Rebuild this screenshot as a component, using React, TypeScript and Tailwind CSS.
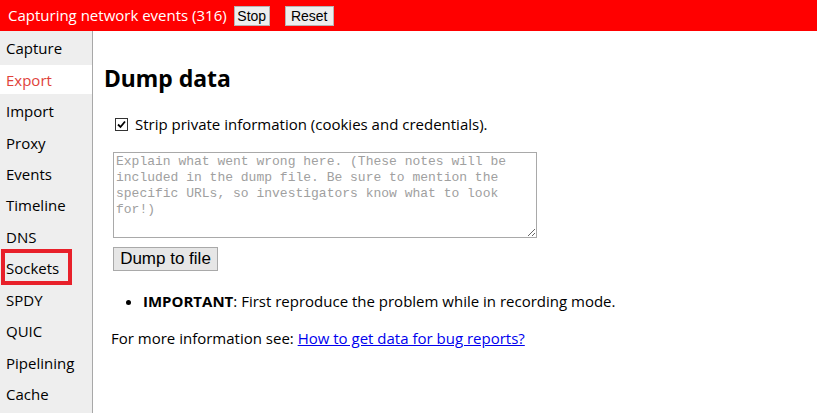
import React from 'react';

const tabs = ['Capture', 'Export', 'Import', 'Proxy', 'Events', 'Timeline', 'DNS', 'Sockets', 'SPDY', 'QUIC', 'Pipelining', 'Cache'];

const ui = { fontFamily: '"Open Sans", "Noto Sans", sans-serif' };
const arial = { fontFamily: '"Liberation Sans", Arial, sans-serif' };

export default function App() {
  return (
    <div className="relative w-[817px] h-[413px] overflow-hidden bg-white text-black" style={ui}>
      <div className="h-[31px] bg-[#ff0000] flex items-center pl-[8px] text-white text-[15px]">
        <span>Capturing network events (316)</span>
        <button className="ml-[7px] h-[20px] w-[36px] bg-[#eeeeee] border border-[#b5b5b5] text-black text-[14px] leading-none" style={arial}>Stop</button>
        <button className="ml-[15px] h-[20px] w-[49px] bg-[#eeeeee] border border-[#b5b5b5] text-black text-[14px] leading-none" style={arial}>Reset</button>
      </div>
      <div className="flex h-[382px]">
        <div className="w-[93px] bg-[#eeeeee] border-r border-[#a8a8a8] flex flex-col gap-[2.45px] pt-[3px]">
          {tabs.map((t) => (
            <div key={t} className={`h-[29px] flex items-center pl-[6px] text-[15px] ${t === 'Export' ? 'bg-white text-[#e0423a]' : ''}`}>{t}</div>
          ))}
        </div>
        <div className="flex-1 pl-[11px]">
          <h1 className="mt-[36px] text-[23px] font-bold leading-none" style={{ fontFamily: '"Noto Sans", sans-serif' }}>Dump data</h1>
          <label className="mt-[23px] flex items-center text-[15px] ml-[11px]">
            <span className="w-[13px] h-[13px] mr-[7px] border border-[#333] bg-white flex items-center justify-center">
              <svg width="9" height="9" viewBox="0 0 9 9"><path d="M1 4.5 L3.5 7 L8 1.5" stroke="#000" strokeWidth="1.8" fill="none" /></svg>
            </span>
            Strip private information (cookies and credentials).
          </label>
          <textarea
            className="mt-[16px] ml-[9px] block w-[424px] h-[86px] border border-[#a9a9a9] px-[2px] pt-[1px] text-[13px] leading-[16px] placeholder:text-[#a0a0a0]"
            style={{ fontFamily: '"Liberation Mono", "Courier New", monospace' }}
            placeholder="Explain what went wrong here. (These notes will be included in the dump file. Be sure to mention the specific URLs, so investigators know what to look for!)"
          />
          <button className="mt-[9px] ml-[9px] h-[24px] w-[105px] bg-[#e6e6e6] border border-[#a9a9a9] text-[17px] leading-none" style={arial}>Dump to file</button>
          <ul className="mt-[19px] ml-[39px] list-disc text-[15px]">
            <li><b>IMPORTANT</b>: First reproduce the problem while in recording mode.</li>
          </ul>
          <p className="mt-[15px] ml-[7px] text-[15px]">
            For more information see: <a href="#" className="text-[#0000ee] underline">How to get data for bug reports?</a>
          </p>
        </div>
      </div>
      <div className="absolute left-[1px] top-[249px] w-[71px] h-[36px] border-[4px] border-[#e8202a]" />
    </div>
  );
}
